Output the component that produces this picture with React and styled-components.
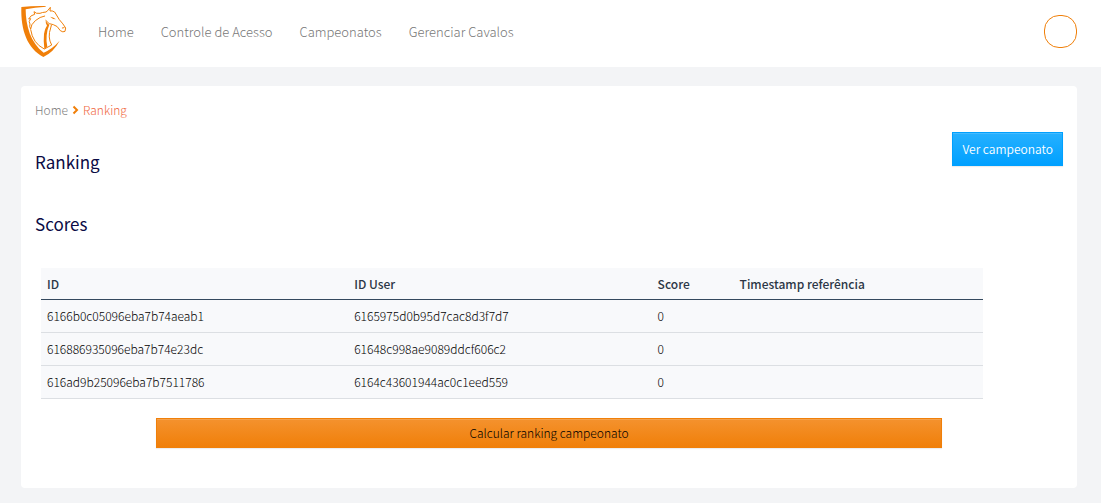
import React from "react";
import styled, { createGlobalStyle } from "styled-components";

const GlobalStyle = createGlobalStyle`
  *, *::before, *::after { box-sizing: border-box; }
  body {
    margin: 0;
    background: #f3f4f6;
    color: #000;
    font-family: "Noto Sans CJK SC", "Noto Sans", sans-serif;
    font-size: 12px;
    font-weight: 300;
    line-height: 20px;
  }
`;

const TopBar = styled.header`
  display: flex;
  align-items: center;
  height: 67px;
  padding: 0 24px 4px 20px;
  background: #fff;
`;

const Brand = styled.a`
  display: flex;
  margin-right: 30px;
`;

const Nav = styled.nav`
  display: flex;
  flex: 1;
  gap: 27px;
`;

const NavLink = styled.a`
  color: #777;
  font-size: 13px;
  text-decoration: none;
`;

const Avatar = styled.button`
  width: 33px;
  height: 33px;
  padding: 0;
  border: 1px solid #f07f09;
  border-radius: 15px;
  background: #fff;
`;

const Card = styled.main`
  margin: 19px 24px 15px 21px;
  padding: 14px 14px 40px;
  border-radius: 4px;
  background: #fff;
`;

const Breadcrumb = styled.nav`
  display: flex;
  align-items: center;
  gap: 3px;
`;

const Crumb = styled.a`
  color: ${(p) => (p.$current ? "#f0683c" : "#808080")};
  text-decoration: none;
`;

const TitleRow = styled.div`
  display: flex;
  align-items: flex-start;
  justify-content: space-between;
  margin-top: 12px;
`;

const Title = styled.h1`
  margin: 16px 0 0;
  color: #0b0b45;
  font-size: 17px;
  font-weight: 400;
  line-height: 28px;
`;

const Subtitle = styled(Title).attrs({ as: "h2" })`
  margin: 34px 0 0;
`;

const Button = styled.button`
  padding: ${(p) => (p.$primary ? "6px 9px" : "4px 9px")};
  border: 1px solid ${(p) => (p.$primary ? "#00a0ff" : "#f07f09")};
  background: ${(p) =>
    p.$primary
      ? "linear-gradient(#26b0ff, #00a0ff)"
      : "linear-gradient(#f4922e, #f07f09)"};
  box-shadow: inset 0 1px 0 rgba(255, 255, 255, 0.15), 0 1px 1px rgba(0, 0, 0, 0.07);
  color: ${(p) => (p.$primary ? "#fff" : "#000")};
  font: inherit;
  font-weight: ${(p) => (p.$primary ? 350 : 300)};
`;

const Table = styled.table`
  width: calc(100% * 11 / 12);
  margin: 30px 0 19px 6px;
  border-collapse: separate;
  border-spacing: 0;
  table-layout: fixed;
  background: #f8f9fb;
  text-align: left;
`;

const Column = styled.col`
  width: ${(p) => p.$width};
`;

const HeadCell = styled.th`
  height: 32px;
  padding: 0 6px;
  border-bottom: 1px solid #34495e;
  color: #2c3746;
  font-weight: 500;
`;

const Cell = styled.td`
  height: 33px;
  padding: 0 6px;
  border-bottom: 1px solid #dcdfe3;
`;

const Actions = styled.div`
  display: grid;
  padding: 0 calc(100% * 17 / 144);
`;

const rows = [
  { id: "6166b0c05096eba7b74aeab1", user: "6165975d0b95d7cac8d3f7d7", score: 0 },
  { id: "616886935096eba7b74e23dc", user: "61648c998ae9089ddcf606c2", score: 0 },
  { id: "616ad9b25096eba7b7511786", user: "6164c43601944ac0c1eed559", score: 0 },
];

function Logo() {
  return (
    <svg width="48" height="54" viewBox="18 15 144 162" fill="none" aria-hidden="true">
      <path
        fill="#f07f09"
        d="M22 21 Q58 17 94 18 L96 20 Q62 22 35 28 C35 76 50 130 89 158 Q116 146 137 122 Q119 156 88 171 C40 145 20 92 22 21Z"
      />
      <path
        fill="#f07f09"
        d="M95 58 Q97 70 106 74 Q99 90 98 106 Q96 124 100 140 L91 147 Q88 122 90 102 Q93 84 99 77 Q94 70 95 58Z M108 50 Q117 50 126 58 Q116 58 108 50Z"
      />
      <path
        stroke="#f07f09"
        strokeWidth="3"
        strokeLinecap="round"
        strokeLinejoin="round"
        d="M96 62 Q104 74 118 74 Q130 76 139 92 Q147 98 153 94 L155 84 Q148 72 136 59 L122 36 Q114 31 108 33 L109 22 L101 32 L96 36 Q84 37 78 40 Q66 42 60 35 L62 43 Q50 45 44 57 L50 56 Q42 66 48 72 Q45 80 50 87 Q50 74 64 62 Q78 50 92 48 M50 89 Q56 130 91 147 L113 135 Q100 112 110 84 L112 76 M145 84 L150 83"
      />
    </svg>
  );
}

function Chevron() {
  return (
    <svg width="9" height="10" viewBox="0 0 9 10" fill="none" aria-hidden="true">
      <path d="M2.5 1.5 L6 5 L2.5 8.5" stroke="#f07f09" strokeWidth="2" />
    </svg>
  );
}

export default function App() {
  return (
    <>
      <GlobalStyle />
      <TopBar>
        <Brand href="#" aria-label="Home">
          <Logo />
        </Brand>
        <Nav>
          <NavLink href="#">Home</NavLink>
          <NavLink href="#">Controle de Acesso</NavLink>
          <NavLink href="#">Campeonatos</NavLink>
          <NavLink href="#">Gerenciar Cavalos</NavLink>
        </Nav>
        <Avatar type="button" aria-label="Perfil" />
      </TopBar>
      <Card>
        <Breadcrumb>
          <Crumb href="#">Home</Crumb>
          <Chevron />
          <Crumb href="#" $current aria-current="page">
            Ranking
          </Crumb>
        </Breadcrumb>
        <TitleRow>
          <Title>Ranking</Title>
          <Button type="button" $primary>
            Ver campeonato
          </Button>
        </TitleRow>
        <Subtitle>Scores</Subtitle>
        <Table>
          <colgroup>
            <Column $width="32.6%" />
            <Column $width="32.2%" />
            <Column $width="8.7%" />
            <Column />
          </colgroup>
          <thead>
            <tr>
              <HeadCell scope="col">ID</HeadCell>
              <HeadCell scope="col">ID User</HeadCell>
              <HeadCell scope="col">Score</HeadCell>
              <HeadCell scope="col">Timestamp referência</HeadCell>
            </tr>
          </thead>
          <tbody>
            {rows.map((row) => (
              <tr key={row.id}>
                <Cell>{row.id}</Cell>
                <Cell>{row.user}</Cell>
                <Cell>{row.score}</Cell>
                <Cell />
              </tr>
            ))}
          </tbody>
        </Table>
        <Actions>
          <Button type="button">Calcular ranking campeonato</Button>
        </Actions>
      </Card>
    </>
  );
}
